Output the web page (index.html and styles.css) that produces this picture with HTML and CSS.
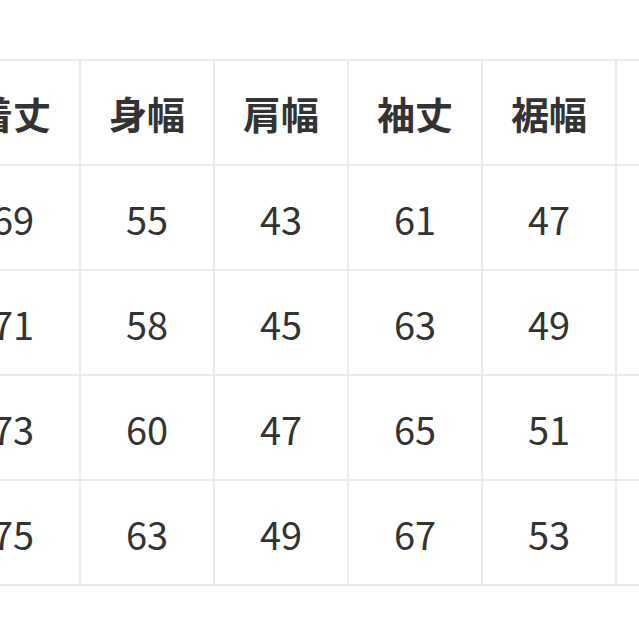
FILE: index.html
```html
<!DOCTYPE html>
<html lang="ja">
<head>
<meta charset="utf-8">
<title>サイズ表</title>
<link rel="stylesheet" href="styles.css">
</head>
<body>
<div class="size-table">
  <div class="cell head">着丈</div>
  <div class="cell head">身幅</div>
  <div class="cell head">肩幅</div>
  <div class="cell head">袖丈</div>
  <div class="cell head">裾幅</div>
  <div class="cell head"></div>

  <div class="cell">69</div>
  <div class="cell">55</div>
  <div class="cell">43</div>
  <div class="cell">61</div>
  <div class="cell">47</div>
  <div class="cell"></div>

  <div class="cell">71</div>
  <div class="cell">58</div>
  <div class="cell">45</div>
  <div class="cell">63</div>
  <div class="cell">49</div>
  <div class="cell"></div>

  <div class="cell">73</div>
  <div class="cell">60</div>
  <div class="cell">47</div>
  <div class="cell">65</div>
  <div class="cell">51</div>
  <div class="cell"></div>

  <div class="cell">75</div>
  <div class="cell">63</div>
  <div class="cell">49</div>
  <div class="cell">67</div>
  <div class="cell">53</div>
  <div class="cell"></div>
</div>
</body>
</html>
```

FILE: styles.css
```css
html, body {
  margin: 0;
  padding: 0;
  background: #ffffff;
  overflow: hidden;
}

body {
  width: 639px;
  height: 639px;
  font-family: "Noto Sans CJK JP", "Noto Sans", sans-serif;
  color: #333333;
}

.size-table {
  display: grid;
  grid-template-columns: repeat(6, 132px);
  grid-auto-rows: 103px;
  gap: 2px;
  padding: 2px;
  background: #ebebeb;
  width: max-content;
  margin-top: 59px;
  margin-left: -55px;
}

.cell {
  background: #ffffff;
  display: flex;
  align-items: center;
  justify-content: center;
  font-size: 38px;
  font-weight: 400;
  line-height: 1;
  padding-top: 3px;
  box-sizing: border-box;
}

.cell.head {
  font-weight: 700;
  padding-top: 0;
}
```
